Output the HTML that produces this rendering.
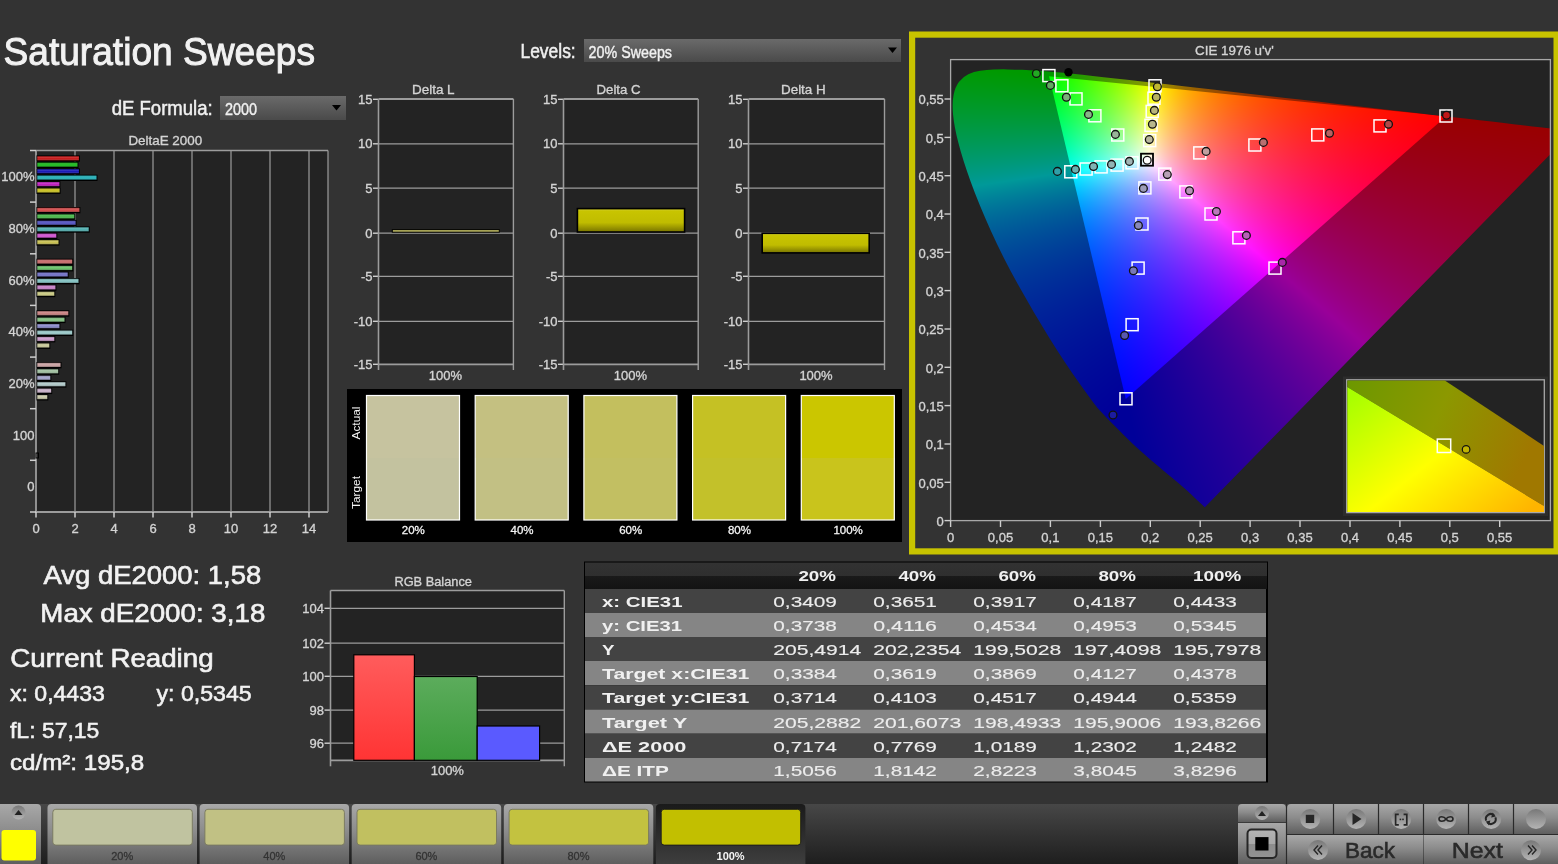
<!DOCTYPE html>
<html><head><meta charset="utf-8"><style>
html,body{margin:0;padding:0;background:#333333;width:1558px;height:864px;overflow:hidden}
svg{position:absolute;left:0;top:0}
text{font-family:"Liberation Sans",sans-serif}
#cie{position:absolute;left:951px;top:60px}
</style></head><body>
<svg id="fb" width="1558" height="864" viewBox="0 0 1558 864"><defs><linearGradient id="fbL" gradientUnits="userSpaceOnUse" x1="0.0" y1="70.0" x2="0.0" y2="508.0"><stop offset="0" stop-color="#009900"/><stop offset="0.2" stop-color="#009a40"/><stop offset="0.3" stop-color="#00908a"/><stop offset="0.43" stop-color="#0060a0"/><stop offset="0.6" stop-color="#0030a0"/><stop offset="0.8" stop-color="#0818a8"/><stop offset="1" stop-color="#2000a0"/></linearGradient><linearGradient id="fbRt" gradientUnits="userSpaceOnUse" x1="1446.2" y1="116.4" x2="1207.0" y2="507.7"><stop offset="0" stop-color="#990000"/><stop offset="0.5" stop-color="#880088"/><stop offset="1" stop-color="#2000a0"/></linearGradient><linearGradient id="fbR" gradientUnits="userSpaceOnUse" x1="1446.2" y1="116.4" x2="1079.3" y2="203.5"><stop offset="0" stop-color="#ff0000"/><stop offset="0.5" stop-color="#ff0000"/><stop offset="1" stop-color="#000000"/></linearGradient><linearGradient id="fbG" gradientUnits="userSpaceOnUse" x1="1049.0" y1="76.3" x2="1242.8" y2="295.8"><stop offset="0" stop-color="#00ff00"/><stop offset="0.5" stop-color="#00ff00"/><stop offset="1" stop-color="#000000"/></linearGradient><linearGradient id="fbB" gradientUnits="userSpaceOnUse" x1="1125.8" y1="399.1" x2="1157.2" y2="87.2"><stop offset="0" stop-color="#0000ff"/><stop offset="0.5" stop-color="#0000ff"/><stop offset="1" stop-color="#000000"/></linearGradient><clipPath id="fbclip"><rect x="951" y="60" width="599" height="460"/></clipPath><clipPath id="fbloc"><path d="M1204.8,507.2 L1196.7,499.9 L1187.0,490.2 L1177.2,482.1 L1167.5,474.0 L1157.8,465.9 L1148.1,457.8 L1138.3,448.9 L1128.6,440.0 L1118.9,430.2 L1109.2,420.5 L1099.4,410.0 L1094.4,404.4 L1065.1,363.3 L1033.3,312.2 L1002.7,257.0 L978.7,203.9 L962.5,159.2 L954.1,126.0 L952.0,102.8 L955.2,86.9 L962.9,76.8 L973.7,71.7 L986.6,69.8 L1000.6,69.3 L1014.8,69.5 L1029.7,70.2 L1045.7,71.3 L1063.1,72.9 L1082.2,74.8 L1103.5,77.1 L1126.9,79.7 L1152.9,82.7 L1181.4,85.9 L1212.5,89.5 L1246.1,93.4 L1281.6,97.5 L1318.1,101.7 L1353.4,105.8 L1387.8,109.7 L1419.0,113.3 L1446.6,116.5 L1470.0,119.2 L1489.7,121.4 L1506.2,123.3 L1520.6,125.0 L1532.7,126.4 L1542.5,127.5 L1550.1,128.4 L1556.1,129.1 L1560.5,129.6 L1565.8,130.2 L1573.0,131.0 Z"/></clipPath></defs><rect x="951" y="60" width="600" height="461" fill="#232323"/><g clip-path="url(#fbclip)"><g clip-path="url(#fbloc)"><path d="M1204.8,507.2 L1196.7,499.9 L1187.0,490.2 L1177.2,482.1 L1167.5,474.0 L1157.8,465.9 L1148.1,457.8 L1138.3,448.9 L1128.6,440.0 L1118.9,430.2 L1109.2,420.5 L1099.4,410.0 L1094.4,404.4 L1065.1,363.3 L1033.3,312.2 L1002.7,257.0 L978.7,203.9 L962.5,159.2 L954.1,126.0 L952.0,102.8 L955.2,86.9 L962.9,76.8 L973.7,71.7 L986.6,69.8 L1000.6,69.3 L1014.8,69.5 L1029.7,70.2 L1045.7,71.3 L1063.1,72.9 L1082.2,74.8 L1103.5,77.1 L1126.9,79.7 L1152.9,82.7 L1181.4,85.9 L1212.5,89.5 L1246.1,93.4 L1281.6,97.5 L1318.1,101.7 L1353.4,105.8 L1387.8,109.7 L1419.0,113.3 L1446.6,116.5 L1470.0,119.2 L1489.7,121.4 L1506.2,123.3 L1520.6,125.0 L1532.7,126.4 L1542.5,127.5 L1550.1,128.4 L1556.1,129.1 L1560.5,129.6 L1565.8,130.2 L1573.0,131.0 Z" fill="url(#fbL)"/><path d="M1446.2,116.4 L1575,130 L1207.0,507.7 L1125.8,399.1 Z" fill="url(#fbRt)"/></g><g style="isolation:isolate"><path d="M1446.2,116.4 L1049.0,76.3 L1125.8,399.1 Z" fill="#000"/><path d="M1446.2,116.4 L1049.0,76.3 L1125.8,399.1 Z" fill="url(#fbR)" style="mix-blend-mode:screen"/><path d="M1446.2,116.4 L1049.0,76.3 L1125.8,399.1 Z" fill="url(#fbG)" style="mix-blend-mode:screen"/><path d="M1446.2,116.4 L1049.0,76.3 L1125.8,399.1 Z" fill="url(#fbB)" style="mix-blend-mode:screen"/></g></g></svg>
<canvas id="cie" width="600" height="461"></canvas>
<svg width="1558" height="864" viewBox="0 0 1558 864">
<defs>
<linearGradient id="ddg" x1="0" y1="0" x2="0" y2="1"><stop offset="0" stop-color="#6a6a6a"/><stop offset="1" stop-color="#4a4a4a"/></linearGradient>
<linearGradient id="ybar" x1="0" y1="0" x2="0" y2="1"><stop offset="0" stop-color="#d4d030"/><stop offset="0.12" stop-color="#c8c400"/><stop offset="0.6" stop-color="#c0bc00"/><stop offset="1" stop-color="#787400"/></linearGradient>
<linearGradient id="rg" x1="0" y1="0" x2="0" y2="1"><stop offset="0" stop-color="#ff5c5c"/><stop offset="1" stop-color="#ff3434"/></linearGradient>
<linearGradient id="gg" x1="0" y1="0" x2="0" y2="1"><stop offset="0" stop-color="#5cac5c"/><stop offset="1" stop-color="#3a9a3a"/></linearGradient>
<linearGradient id="thg" x1="0" y1="0" x2="0" y2="1"><stop offset="0" stop-color="#323232"/><stop offset="0.5" stop-color="#2f2f2f"/><stop offset="0.52" stop-color="#1a1a1a"/><stop offset="1" stop-color="#131313"/></linearGradient>
<linearGradient id="tbg" x1="0" y1="0" x2="0" y2="1"><stop offset="0" stop-color="#474747"/><stop offset="1" stop-color="#1e1e1e"/></linearGradient>
<linearGradient id="btng" x1="0" y1="0" x2="0" y2="1"><stop offset="0" stop-color="#a8a8a8"/><stop offset="0.45" stop-color="#8c8c8c"/><stop offset="1" stop-color="#5e5e5e"/></linearGradient>
<linearGradient id="btng2" x1="0" y1="-0.5" x2="0" y2="1"><stop offset="0" stop-color="#a8a8a8"/><stop offset="0.45" stop-color="#8c8c8c"/><stop offset="1" stop-color="#5e5e5e"/></linearGradient>
<linearGradient id="selg" x1="0" y1="0" x2="0" y2="1"><stop offset="0" stop-color="#1a1a1a"/><stop offset="1" stop-color="#3e3e3e"/></linearGradient>
<linearGradient id="circg" x1="0" y1="0" x2="0" y2="1"><stop offset="0" stop-color="#787878"/><stop offset="1" stop-color="#b4b4b4"/></linearGradient>
<linearGradient id="olv" x1="0" y1="0" x2="1" y2="0.3"><stop offset="0" stop-color="#6c9800"/><stop offset="0.5" stop-color="#8c9800"/><stop offset="1" stop-color="#a07800"/></linearGradient>
<linearGradient id="ylw" x1="0" y1="0.1" x2="1" y2="0.9"><stop offset="0" stop-color="#a8ff00"/><stop offset="0.5" stop-color="#ffff00"/><stop offset="1" stop-color="#ffb400"/></linearGradient>
<linearGradient id="stopg" x1="0" y1="0" x2="0" y2="1"><stop offset="0" stop-color="#b4b4b4"/><stop offset="0.5" stop-color="#a8a8a8"/><stop offset="0.52" stop-color="#8c8c8c"/><stop offset="1" stop-color="#949494"/></linearGradient>
<linearGradient id="barsh" x1="0" y1="0" x2="0" y2="1"><stop offset="0" stop-color="#000" stop-opacity="0.25"/><stop offset="0.35" stop-color="#fff" stop-opacity="0.12"/><stop offset="0.6" stop-color="#fff" stop-opacity="0"/><stop offset="1" stop-color="#000" stop-opacity="0.4"/></linearGradient>
</defs>
<text x="3.5" y="65.0" font-size="39.0" fill="#f2f2f2" text-anchor="start" textLength="311.5" lengthAdjust="spacingAndGlyphs" stroke="#f2f2f2" stroke-width="0.98">Saturation Sweeps</text>
<text x="520.5" y="57.6" font-size="19.5" fill="#f0f0f0" text-anchor="start" textLength="55.2" lengthAdjust="spacingAndGlyphs" stroke="#f0f0f0" stroke-width="0.49">Levels:</text>
<rect x="584" y="39" width="317" height="23" fill="url(#ddg)"/>
<text x="588.6" y="57.6" font-size="16.0" fill="#f0f0f0" text-anchor="start" textLength="83.4" lengthAdjust="spacingAndGlyphs" stroke="#f0f0f0" stroke-width="0.40">20% Sweeps</text>
<path d="M888.0,47.5 h9 l-4.5,5.5 z" fill="#000"/>
<text x="111.7" y="115.0" font-size="19.5" fill="#f0f0f0" text-anchor="start" textLength="101.0" lengthAdjust="spacingAndGlyphs" stroke="#f0f0f0" stroke-width="0.49">dE Formula:</text>
<rect x="220" y="96" width="126" height="24" fill="url(#ddg)"/>
<text x="224.9" y="114.7" font-size="16.0" fill="#f0f0f0" text-anchor="start" textLength="32.0" lengthAdjust="spacingAndGlyphs" stroke="#f0f0f0" stroke-width="0.40">2000</text>
<path d="M332.0,105.0 h9 l-4.5,5.5 z" fill="#000"/>
<text x="128.4" y="144.8" font-size="13.0" fill="#d4d4d4" text-anchor="start" textLength="73.8" lengthAdjust="spacingAndGlyphs" stroke="#d4d4d4" stroke-width="0.33">DeltaE 2000</text>
<rect x="36.0" y="150.5" width="292.0" height="361.5" fill="#232323"/>
<line x1="75.0" y1="150.5" x2="75.0" y2="512.0" stroke="#9c9c9c" stroke-width="1.2"/>
<line x1="114.0" y1="150.5" x2="114.0" y2="512.0" stroke="#9c9c9c" stroke-width="1.2"/>
<line x1="153.0" y1="150.5" x2="153.0" y2="512.0" stroke="#9c9c9c" stroke-width="1.2"/>
<line x1="192.0" y1="150.5" x2="192.0" y2="512.0" stroke="#9c9c9c" stroke-width="1.2"/>
<line x1="231.0" y1="150.5" x2="231.0" y2="512.0" stroke="#9c9c9c" stroke-width="1.2"/>
<line x1="270.0" y1="150.5" x2="270.0" y2="512.0" stroke="#9c9c9c" stroke-width="1.2"/>
<line x1="309.0" y1="150.5" x2="309.0" y2="512.0" stroke="#9c9c9c" stroke-width="1.2"/>
<line x1="36.0" y1="150.5" x2="328.0" y2="150.5" stroke="#9c9c9c" stroke-width="1.5"/>
<line x1="328.0" y1="150.5" x2="328.0" y2="512.0" stroke="#9c9c9c" stroke-width="1.2"/>
<line x1="36.0" y1="150.5" x2="36.0" y2="512.0" stroke="#9c9c9c" stroke-width="1.8"/>
<line x1="35.1" y1="512.0" x2="328.0" y2="512.0" stroke="#9c9c9c" stroke-width="1.8"/>
<line x1="30.0" y1="150.5" x2="36.0" y2="150.5" stroke="#cfcfcf" stroke-width="1.5"/>
<line x1="30.0" y1="202.1" x2="36.0" y2="202.1" stroke="#cfcfcf" stroke-width="1.5"/>
<line x1="30.0" y1="253.8" x2="36.0" y2="253.8" stroke="#cfcfcf" stroke-width="1.5"/>
<line x1="30.0" y1="305.4" x2="36.0" y2="305.4" stroke="#cfcfcf" stroke-width="1.5"/>
<line x1="30.0" y1="357.1" x2="36.0" y2="357.1" stroke="#cfcfcf" stroke-width="1.5"/>
<line x1="30.0" y1="408.7" x2="36.0" y2="408.7" stroke="#cfcfcf" stroke-width="1.5"/>
<line x1="30.0" y1="460.3" x2="36.0" y2="460.3" stroke="#cfcfcf" stroke-width="1.5"/>
<line x1="30.0" y1="512.0" x2="36.0" y2="512.0" stroke="#cfcfcf" stroke-width="1.5"/>
<line x1="36.0" y1="512.0" x2="36.0" y2="517.5" stroke="#cfcfcf" stroke-width="1.5"/>
<text x="36.0" y="532.8" font-size="13.0" fill="#d4d4d4" text-anchor="middle" stroke="#d4d4d4" stroke-width="0.33">0</text>
<line x1="75.0" y1="512.0" x2="75.0" y2="517.5" stroke="#cfcfcf" stroke-width="1.5"/>
<text x="75.0" y="532.8" font-size="13.0" fill="#d4d4d4" text-anchor="middle" stroke="#d4d4d4" stroke-width="0.33">2</text>
<line x1="114.0" y1="512.0" x2="114.0" y2="517.5" stroke="#cfcfcf" stroke-width="1.5"/>
<text x="114.0" y="532.8" font-size="13.0" fill="#d4d4d4" text-anchor="middle" stroke="#d4d4d4" stroke-width="0.33">4</text>
<line x1="153.0" y1="512.0" x2="153.0" y2="517.5" stroke="#cfcfcf" stroke-width="1.5"/>
<text x="153.0" y="532.8" font-size="13.0" fill="#d4d4d4" text-anchor="middle" stroke="#d4d4d4" stroke-width="0.33">6</text>
<line x1="192.0" y1="512.0" x2="192.0" y2="517.5" stroke="#cfcfcf" stroke-width="1.5"/>
<text x="192.0" y="532.8" font-size="13.0" fill="#d4d4d4" text-anchor="middle" stroke="#d4d4d4" stroke-width="0.33">8</text>
<line x1="231.0" y1="512.0" x2="231.0" y2="517.5" stroke="#cfcfcf" stroke-width="1.5"/>
<text x="231.0" y="532.8" font-size="13.0" fill="#d4d4d4" text-anchor="middle" stroke="#d4d4d4" stroke-width="0.33">10</text>
<line x1="270.0" y1="512.0" x2="270.0" y2="517.5" stroke="#cfcfcf" stroke-width="1.5"/>
<text x="270.0" y="532.8" font-size="13.0" fill="#d4d4d4" text-anchor="middle" stroke="#d4d4d4" stroke-width="0.33">12</text>
<line x1="309.0" y1="512.0" x2="309.0" y2="517.5" stroke="#cfcfcf" stroke-width="1.5"/>
<text x="309.0" y="532.8" font-size="13.0" fill="#d4d4d4" text-anchor="middle" stroke="#d4d4d4" stroke-width="0.33">14</text>
<text x="34.5" y="181.3" font-size="13.0" fill="#d4d4d4" text-anchor="end" stroke="#d4d4d4" stroke-width="0.33">100%</text>
<text x="34.5" y="232.9" font-size="13.0" fill="#d4d4d4" text-anchor="end" stroke="#d4d4d4" stroke-width="0.33">80%</text>
<text x="34.5" y="284.6" font-size="13.0" fill="#d4d4d4" text-anchor="end" stroke="#d4d4d4" stroke-width="0.33">60%</text>
<text x="34.5" y="336.2" font-size="13.0" fill="#d4d4d4" text-anchor="end" stroke="#d4d4d4" stroke-width="0.33">40%</text>
<text x="34.5" y="387.9" font-size="13.0" fill="#d4d4d4" text-anchor="end" stroke="#d4d4d4" stroke-width="0.33">20%</text>
<text x="34.5" y="439.5" font-size="13.0" fill="#d4d4d4" text-anchor="end" stroke="#d4d4d4" stroke-width="0.33">100</text>
<text x="34.5" y="491.1" font-size="13.0" fill="#d4d4d4" text-anchor="end" stroke="#d4d4d4" stroke-width="0.33">0</text>
<rect x="36.5" y="155.4" width="43.4" height="6.3" fill="#000"/>
<rect x="37.3" y="156.2" width="41.6" height="4.2" fill="#c81818"/>
<rect x="37.3" y="156.2" width="41.6" height="4.2" fill="url(#barsh)"/>
<rect x="36.5" y="161.8" width="42.0" height="6.3" fill="#000"/>
<rect x="37.3" y="162.6" width="40.2" height="4.2" fill="#18b818"/>
<rect x="37.3" y="162.6" width="40.2" height="4.2" fill="url(#barsh)"/>
<rect x="36.5" y="168.3" width="43.4" height="6.3" fill="#000"/>
<rect x="37.3" y="169.1" width="41.6" height="4.2" fill="#1818b8"/>
<rect x="37.3" y="169.1" width="41.6" height="4.2" fill="url(#barsh)"/>
<rect x="36.5" y="174.7" width="61.0" height="6.3" fill="#000"/>
<rect x="37.3" y="175.5" width="59.2" height="4.2" fill="#20b0b8"/>
<rect x="37.3" y="175.5" width="59.2" height="4.2" fill="url(#barsh)"/>
<rect x="36.5" y="181.2" width="23.9" height="6.3" fill="#000"/>
<rect x="37.3" y="182.0" width="22.1" height="4.2" fill="#c020c0"/>
<rect x="37.3" y="182.0" width="22.1" height="4.2" fill="url(#barsh)"/>
<rect x="36.5" y="187.6" width="24.1" height="6.3" fill="#000"/>
<rect x="37.3" y="188.4" width="22.3" height="4.2" fill="#c8c020"/>
<rect x="37.3" y="188.4" width="22.3" height="4.2" fill="url(#barsh)"/>
<rect x="36.5" y="207.0" width="43.9" height="6.3" fill="#000"/>
<rect x="37.3" y="207.8" width="42.1" height="4.2" fill="#d04848"/>
<rect x="37.3" y="207.8" width="42.1" height="4.2" fill="url(#barsh)"/>
<rect x="36.5" y="213.5" width="38.8" height="6.3" fill="#000"/>
<rect x="37.3" y="214.3" width="37.0" height="4.2" fill="#48b848"/>
<rect x="37.3" y="214.3" width="37.0" height="4.2" fill="url(#barsh)"/>
<rect x="36.5" y="219.9" width="40.1" height="6.3" fill="#000"/>
<rect x="37.3" y="220.7" width="38.3" height="4.2" fill="#5050c0"/>
<rect x="37.3" y="220.7" width="38.3" height="4.2" fill="url(#barsh)"/>
<rect x="36.5" y="226.4" width="53.2" height="6.3" fill="#000"/>
<rect x="37.3" y="227.2" width="51.4" height="4.2" fill="#50b0b0"/>
<rect x="37.3" y="227.2" width="51.4" height="4.2" fill="url(#barsh)"/>
<rect x="36.5" y="232.8" width="20.8" height="6.3" fill="#000"/>
<rect x="37.3" y="233.6" width="19.0" height="4.2" fill="#d050d0"/>
<rect x="37.3" y="233.6" width="19.0" height="4.2" fill="url(#barsh)"/>
<rect x="36.5" y="239.3" width="23.0" height="6.3" fill="#000"/>
<rect x="37.3" y="240.1" width="21.2" height="4.2" fill="#c8c050"/>
<rect x="37.3" y="240.1" width="21.2" height="4.2" fill="url(#barsh)"/>
<rect x="36.5" y="258.7" width="36.7" height="6.3" fill="#000"/>
<rect x="37.3" y="259.5" width="34.9" height="4.2" fill="#c86868"/>
<rect x="37.3" y="259.5" width="34.9" height="4.2" fill="url(#barsh)"/>
<rect x="36.5" y="265.1" width="36.7" height="6.3" fill="#000"/>
<rect x="37.3" y="265.9" width="34.9" height="4.2" fill="#68c068"/>
<rect x="37.3" y="265.9" width="34.9" height="4.2" fill="url(#barsh)"/>
<rect x="36.5" y="271.6" width="32.2" height="6.3" fill="#000"/>
<rect x="37.3" y="272.4" width="30.4" height="4.2" fill="#7070c8"/>
<rect x="37.3" y="272.4" width="30.4" height="4.2" fill="url(#barsh)"/>
<rect x="36.5" y="278.0" width="43.0" height="6.3" fill="#000"/>
<rect x="37.3" y="278.8" width="41.2" height="4.2" fill="#80c0c0"/>
<rect x="37.3" y="278.8" width="41.2" height="4.2" fill="url(#barsh)"/>
<rect x="36.5" y="284.5" width="19.9" height="6.3" fill="#000"/>
<rect x="37.3" y="285.3" width="18.1" height="4.2" fill="#c880c8"/>
<rect x="37.3" y="285.3" width="18.1" height="4.2" fill="url(#barsh)"/>
<rect x="36.5" y="290.9" width="18.8" height="6.3" fill="#000"/>
<rect x="37.3" y="291.7" width="17.0" height="4.2" fill="#c8c880"/>
<rect x="37.3" y="291.7" width="17.0" height="4.2" fill="url(#barsh)"/>
<rect x="36.5" y="310.3" width="32.8" height="6.3" fill="#000"/>
<rect x="37.3" y="311.1" width="31.0" height="4.2" fill="#c88080"/>
<rect x="37.3" y="311.1" width="31.0" height="4.2" fill="url(#barsh)"/>
<rect x="36.5" y="316.8" width="29.0" height="6.3" fill="#000"/>
<rect x="37.3" y="317.6" width="27.2" height="4.2" fill="#80c080"/>
<rect x="37.3" y="317.6" width="27.2" height="4.2" fill="url(#barsh)"/>
<rect x="36.5" y="323.2" width="23.9" height="6.3" fill="#000"/>
<rect x="37.3" y="324.0" width="22.1" height="4.2" fill="#8888c8"/>
<rect x="37.3" y="324.0" width="22.1" height="4.2" fill="url(#barsh)"/>
<rect x="36.5" y="329.7" width="36.7" height="6.3" fill="#000"/>
<rect x="37.3" y="330.5" width="34.9" height="4.2" fill="#98c8c8"/>
<rect x="37.3" y="330.5" width="34.9" height="4.2" fill="url(#barsh)"/>
<rect x="36.5" y="336.1" width="18.8" height="6.3" fill="#000"/>
<rect x="37.3" y="336.9" width="17.0" height="4.2" fill="#c898c8"/>
<rect x="37.3" y="336.9" width="17.0" height="4.2" fill="url(#barsh)"/>
<rect x="36.5" y="342.6" width="13.8" height="6.3" fill="#000"/>
<rect x="37.3" y="343.4" width="12.0" height="4.2" fill="#c8c898"/>
<rect x="37.3" y="343.4" width="12.0" height="4.2" fill="url(#barsh)"/>
<rect x="36.5" y="362.0" width="25.0" height="6.3" fill="#000"/>
<rect x="37.3" y="362.8" width="23.2" height="4.2" fill="#c8a0a0"/>
<rect x="37.3" y="362.8" width="23.2" height="4.2" fill="url(#barsh)"/>
<rect x="36.5" y="368.4" width="22.7" height="6.3" fill="#000"/>
<rect x="37.3" y="369.2" width="20.9" height="4.2" fill="#a0c0a0"/>
<rect x="37.3" y="369.2" width="20.9" height="4.2" fill="url(#barsh)"/>
<rect x="36.5" y="374.9" width="14.8" height="6.3" fill="#000"/>
<rect x="37.3" y="375.7" width="13.0" height="4.2" fill="#a0a0c8"/>
<rect x="37.3" y="375.7" width="13.0" height="4.2" fill="url(#barsh)"/>
<rect x="36.5" y="381.3" width="29.9" height="6.3" fill="#000"/>
<rect x="37.3" y="382.1" width="28.1" height="4.2" fill="#b0c8c8"/>
<rect x="37.3" y="382.1" width="28.1" height="4.2" fill="url(#barsh)"/>
<rect x="36.5" y="387.8" width="15.7" height="6.3" fill="#000"/>
<rect x="37.3" y="388.6" width="13.9" height="4.2" fill="#c8b0c8"/>
<rect x="37.3" y="388.6" width="13.9" height="4.2" fill="url(#barsh)"/>
<rect x="36.5" y="394.2" width="11.8" height="6.3" fill="#000"/>
<rect x="37.3" y="395.0" width="10.0" height="4.2" fill="#c8c8a8"/>
<rect x="37.3" y="395.0" width="10.0" height="4.2" fill="url(#barsh)"/>
<rect x="36" y="453" width="2.5" height="5" fill="none" stroke="#000" stroke-width="1"/>
<text x="412.0" y="93.9" font-size="13.0" fill="#d4d4d4" text-anchor="start" textLength="42.6" lengthAdjust="spacingAndGlyphs" stroke="#d4d4d4" stroke-width="0.33">Delta L</text>
<rect x="378.5" y="99.0" width="134.9" height="265.3" fill="#232323"/>
<line x1="373.0" y1="99.3" x2="378.5" y2="99.3" stroke="#cfcfcf" stroke-width="1.4"/>
<text x="372.5" y="103.9" font-size="13.0" fill="#d4d4d4" text-anchor="end" stroke="#d4d4d4" stroke-width="0.33">15</text>
<line x1="378.5" y1="143.8" x2="513.4" y2="143.8" stroke="#9c9c9c" stroke-width="1.2"/>
<line x1="373.0" y1="143.8" x2="378.5" y2="143.8" stroke="#cfcfcf" stroke-width="1.4"/>
<text x="372.5" y="148.4" font-size="13.0" fill="#d4d4d4" text-anchor="end" stroke="#d4d4d4" stroke-width="0.33">10</text>
<line x1="378.5" y1="188.2" x2="513.4" y2="188.2" stroke="#9c9c9c" stroke-width="1.2"/>
<line x1="373.0" y1="188.2" x2="378.5" y2="188.2" stroke="#cfcfcf" stroke-width="1.4"/>
<text x="372.5" y="192.8" font-size="13.0" fill="#d4d4d4" text-anchor="end" stroke="#d4d4d4" stroke-width="0.33">5</text>
<line x1="378.5" y1="233.2" x2="513.4" y2="233.2" stroke="#9c9c9c" stroke-width="1.2"/>
<line x1="373.0" y1="233.2" x2="378.5" y2="233.2" stroke="#cfcfcf" stroke-width="1.4"/>
<text x="372.5" y="237.8" font-size="13.0" fill="#d4d4d4" text-anchor="end" stroke="#d4d4d4" stroke-width="0.33">0</text>
<line x1="378.5" y1="276.3" x2="513.4" y2="276.3" stroke="#9c9c9c" stroke-width="1.2"/>
<line x1="373.0" y1="276.3" x2="378.5" y2="276.3" stroke="#cfcfcf" stroke-width="1.4"/>
<text x="372.5" y="280.9" font-size="13.0" fill="#d4d4d4" text-anchor="end" stroke="#d4d4d4" stroke-width="0.33">-5</text>
<line x1="378.5" y1="321.3" x2="513.4" y2="321.3" stroke="#9c9c9c" stroke-width="1.2"/>
<line x1="373.0" y1="321.3" x2="378.5" y2="321.3" stroke="#cfcfcf" stroke-width="1.4"/>
<text x="372.5" y="325.9" font-size="13.0" fill="#d4d4d4" text-anchor="end" stroke="#d4d4d4" stroke-width="0.33">-10</text>
<line x1="373.0" y1="364.3" x2="378.5" y2="364.3" stroke="#cfcfcf" stroke-width="1.4"/>
<text x="372.5" y="368.9" font-size="13.0" fill="#d4d4d4" text-anchor="end" stroke="#d4d4d4" stroke-width="0.33">-15</text>
<line x1="378.5" y1="99.0" x2="513.4" y2="99.0" stroke="#9c9c9c" stroke-width="1.8"/>
<line x1="378.5" y1="364.3" x2="513.4" y2="364.3" stroke="#9c9c9c" stroke-width="1.8"/>
<line x1="378.5" y1="99.0" x2="378.5" y2="370.0" stroke="#9c9c9c" stroke-width="1.6"/>
<line x1="513.4" y1="99.0" x2="513.4" y2="370.0" stroke="#9c9c9c" stroke-width="1.4"/>
<text x="445.4" y="379.6" font-size="13.0" fill="#d4d4d4" text-anchor="middle" stroke="#d4d4d4" stroke-width="0.33">100%</text>
<text x="596.5" y="93.9" font-size="13.0" fill="#d4d4d4" text-anchor="start" textLength="44.1" lengthAdjust="spacingAndGlyphs" stroke="#d4d4d4" stroke-width="0.33">Delta C</text>
<rect x="563.5" y="99.0" width="134.7" height="265.3" fill="#232323"/>
<line x1="558.0" y1="99.3" x2="563.5" y2="99.3" stroke="#cfcfcf" stroke-width="1.4"/>
<text x="557.5" y="103.9" font-size="13.0" fill="#d4d4d4" text-anchor="end" stroke="#d4d4d4" stroke-width="0.33">15</text>
<line x1="563.5" y1="143.8" x2="698.2" y2="143.8" stroke="#9c9c9c" stroke-width="1.2"/>
<line x1="558.0" y1="143.8" x2="563.5" y2="143.8" stroke="#cfcfcf" stroke-width="1.4"/>
<text x="557.5" y="148.4" font-size="13.0" fill="#d4d4d4" text-anchor="end" stroke="#d4d4d4" stroke-width="0.33">10</text>
<line x1="563.5" y1="188.2" x2="698.2" y2="188.2" stroke="#9c9c9c" stroke-width="1.2"/>
<line x1="558.0" y1="188.2" x2="563.5" y2="188.2" stroke="#cfcfcf" stroke-width="1.4"/>
<text x="557.5" y="192.8" font-size="13.0" fill="#d4d4d4" text-anchor="end" stroke="#d4d4d4" stroke-width="0.33">5</text>
<line x1="563.5" y1="233.2" x2="698.2" y2="233.2" stroke="#9c9c9c" stroke-width="1.2"/>
<line x1="558.0" y1="233.2" x2="563.5" y2="233.2" stroke="#cfcfcf" stroke-width="1.4"/>
<text x="557.5" y="237.8" font-size="13.0" fill="#d4d4d4" text-anchor="end" stroke="#d4d4d4" stroke-width="0.33">0</text>
<line x1="563.5" y1="276.3" x2="698.2" y2="276.3" stroke="#9c9c9c" stroke-width="1.2"/>
<line x1="558.0" y1="276.3" x2="563.5" y2="276.3" stroke="#cfcfcf" stroke-width="1.4"/>
<text x="557.5" y="280.9" font-size="13.0" fill="#d4d4d4" text-anchor="end" stroke="#d4d4d4" stroke-width="0.33">-5</text>
<line x1="563.5" y1="321.3" x2="698.2" y2="321.3" stroke="#9c9c9c" stroke-width="1.2"/>
<line x1="558.0" y1="321.3" x2="563.5" y2="321.3" stroke="#cfcfcf" stroke-width="1.4"/>
<text x="557.5" y="325.9" font-size="13.0" fill="#d4d4d4" text-anchor="end" stroke="#d4d4d4" stroke-width="0.33">-10</text>
<line x1="558.0" y1="364.3" x2="563.5" y2="364.3" stroke="#cfcfcf" stroke-width="1.4"/>
<text x="557.5" y="368.9" font-size="13.0" fill="#d4d4d4" text-anchor="end" stroke="#d4d4d4" stroke-width="0.33">-15</text>
<line x1="563.5" y1="99.0" x2="698.2" y2="99.0" stroke="#9c9c9c" stroke-width="1.8"/>
<line x1="563.5" y1="364.3" x2="698.2" y2="364.3" stroke="#9c9c9c" stroke-width="1.8"/>
<line x1="563.5" y1="99.0" x2="563.5" y2="370.0" stroke="#9c9c9c" stroke-width="1.6"/>
<line x1="698.2" y1="99.0" x2="698.2" y2="370.0" stroke="#9c9c9c" stroke-width="1.4"/>
<text x="630.4" y="379.6" font-size="13.0" fill="#d4d4d4" text-anchor="middle" stroke="#d4d4d4" stroke-width="0.33">100%</text>
<text x="781.0" y="93.9" font-size="13.0" fill="#d4d4d4" text-anchor="start" textLength="44.7" lengthAdjust="spacingAndGlyphs" stroke="#d4d4d4" stroke-width="0.33">Delta H</text>
<rect x="748.5" y="99.0" width="136.0" height="265.3" fill="#232323"/>
<line x1="743.0" y1="99.3" x2="748.5" y2="99.3" stroke="#cfcfcf" stroke-width="1.4"/>
<text x="742.5" y="103.9" font-size="13.0" fill="#d4d4d4" text-anchor="end" stroke="#d4d4d4" stroke-width="0.33">15</text>
<line x1="748.5" y1="143.8" x2="884.5" y2="143.8" stroke="#9c9c9c" stroke-width="1.2"/>
<line x1="743.0" y1="143.8" x2="748.5" y2="143.8" stroke="#cfcfcf" stroke-width="1.4"/>
<text x="742.5" y="148.4" font-size="13.0" fill="#d4d4d4" text-anchor="end" stroke="#d4d4d4" stroke-width="0.33">10</text>
<line x1="748.5" y1="188.2" x2="884.5" y2="188.2" stroke="#9c9c9c" stroke-width="1.2"/>
<line x1="743.0" y1="188.2" x2="748.5" y2="188.2" stroke="#cfcfcf" stroke-width="1.4"/>
<text x="742.5" y="192.8" font-size="13.0" fill="#d4d4d4" text-anchor="end" stroke="#d4d4d4" stroke-width="0.33">5</text>
<line x1="748.5" y1="233.2" x2="884.5" y2="233.2" stroke="#9c9c9c" stroke-width="1.2"/>
<line x1="743.0" y1="233.2" x2="748.5" y2="233.2" stroke="#cfcfcf" stroke-width="1.4"/>
<text x="742.5" y="237.8" font-size="13.0" fill="#d4d4d4" text-anchor="end" stroke="#d4d4d4" stroke-width="0.33">0</text>
<line x1="748.5" y1="276.3" x2="884.5" y2="276.3" stroke="#9c9c9c" stroke-width="1.2"/>
<line x1="743.0" y1="276.3" x2="748.5" y2="276.3" stroke="#cfcfcf" stroke-width="1.4"/>
<text x="742.5" y="280.9" font-size="13.0" fill="#d4d4d4" text-anchor="end" stroke="#d4d4d4" stroke-width="0.33">-5</text>
<line x1="748.5" y1="321.3" x2="884.5" y2="321.3" stroke="#9c9c9c" stroke-width="1.2"/>
<line x1="743.0" y1="321.3" x2="748.5" y2="321.3" stroke="#cfcfcf" stroke-width="1.4"/>
<text x="742.5" y="325.9" font-size="13.0" fill="#d4d4d4" text-anchor="end" stroke="#d4d4d4" stroke-width="0.33">-10</text>
<line x1="743.0" y1="364.3" x2="748.5" y2="364.3" stroke="#cfcfcf" stroke-width="1.4"/>
<text x="742.5" y="368.9" font-size="13.0" fill="#d4d4d4" text-anchor="end" stroke="#d4d4d4" stroke-width="0.33">-15</text>
<line x1="748.5" y1="99.0" x2="884.5" y2="99.0" stroke="#9c9c9c" stroke-width="1.8"/>
<line x1="748.5" y1="364.3" x2="884.5" y2="364.3" stroke="#9c9c9c" stroke-width="1.8"/>
<line x1="748.5" y1="99.0" x2="748.5" y2="370.0" stroke="#9c9c9c" stroke-width="1.6"/>
<line x1="884.5" y1="99.0" x2="884.5" y2="370.0" stroke="#9c9c9c" stroke-width="1.4"/>
<text x="816.0" y="379.6" font-size="13.0" fill="#d4d4d4" text-anchor="middle" stroke="#d4d4d4" stroke-width="0.33">100%</text>
<rect x="392.3" y="229.6" width="107" height="2.6" fill="#b8b460" stroke="#000" stroke-width="1"/>
<rect x="577.4" y="208.6" width="107.2" height="23.4" fill="url(#ybar)" stroke="#000" stroke-width="1.6"/>
<rect x="762.2" y="233.3" width="107" height="19.6" fill="url(#ybar)" stroke="#000" stroke-width="1.6"/>
<rect x="347.0" y="389.0" width="555.0" height="153.0" fill="#000"/>
<rect x="366.5" y="395.5" width="93" height="124.5" fill="#c6c39f"/>
<rect x="366.5" y="458" width="93" height="62" fill="#c3c29f"/>
<rect x="366.5" y="395.5" width="93" height="124.5" fill="none" stroke="#fff" stroke-width="1.2"/>
<text x="413.3" y="534.0" font-size="11.5" fill="#f4f4f4" text-anchor="middle" stroke="#f4f4f4" stroke-width="0.29">20%</text>
<rect x="475.2" y="395.5" width="93" height="124.5" fill="#c4c081"/>
<rect x="475.2" y="458" width="93" height="62" fill="#c2c084"/>
<rect x="475.2" y="395.5" width="93" height="124.5" fill="none" stroke="#fff" stroke-width="1.2"/>
<text x="522.0" y="534.0" font-size="11.5" fill="#f4f4f4" text-anchor="middle" stroke="#f4f4f4" stroke-width="0.29">40%</text>
<rect x="583.9" y="395.5" width="93" height="124.5" fill="#c3bf5e"/>
<rect x="583.9" y="458" width="93" height="62" fill="#c2bf62"/>
<rect x="583.9" y="395.5" width="93" height="124.5" fill="none" stroke="#fff" stroke-width="1.2"/>
<text x="630.7" y="534.0" font-size="11.5" fill="#f4f4f4" text-anchor="middle" stroke="#f4f4f4" stroke-width="0.29">60%</text>
<rect x="692.6" y="395.5" width="93" height="124.5" fill="#c5c124"/>
<rect x="692.6" y="458" width="93" height="62" fill="#c3c12a"/>
<rect x="692.6" y="395.5" width="93" height="124.5" fill="none" stroke="#fff" stroke-width="1.2"/>
<text x="739.4" y="534.0" font-size="11.5" fill="#f4f4f4" text-anchor="middle" stroke="#f4f4f4" stroke-width="0.29">80%</text>
<rect x="801.3" y="395.5" width="93" height="124.5" fill="#cbc600"/>
<rect x="801.3" y="458" width="93" height="62" fill="#c9c41c"/>
<rect x="801.3" y="395.5" width="93" height="124.5" fill="none" stroke="#fff" stroke-width="1.2"/>
<text x="848.1" y="534.0" font-size="11.5" fill="#f4f4f4" text-anchor="middle" stroke="#f4f4f4" stroke-width="0.29">100%</text>
<text transform="translate(359.5,423) rotate(-90)" font-size="11.5" fill="#f4f4f4" text-anchor="middle" textLength="33" lengthAdjust="spacingAndGlyphs">Actual</text>
<text transform="translate(359.5,492.5) rotate(-90)" font-size="11.5" fill="#f4f4f4" text-anchor="middle" textLength="33" lengthAdjust="spacingAndGlyphs">Target</text>
<text x="43.5" y="584.4" font-size="25.0" fill="#f2f2f2" text-anchor="start" textLength="217.7" lengthAdjust="spacingAndGlyphs" stroke="#f2f2f2" stroke-width="0.62">Avg dE2000: 1,58</text>
<text x="40.3" y="622.2" font-size="25.0" fill="#f2f2f2" text-anchor="start" textLength="225.0" lengthAdjust="spacingAndGlyphs" stroke="#f2f2f2" stroke-width="0.62">Max dE2000: 3,18</text>
<text x="10.3" y="667.1" font-size="25.0" fill="#f2f2f2" text-anchor="start" textLength="203.3" lengthAdjust="spacingAndGlyphs" stroke="#f2f2f2" stroke-width="0.62">Current Reading</text>
<text x="10.0" y="700.6" font-size="21.5" fill="#f2f2f2" text-anchor="start" textLength="94.8" lengthAdjust="spacingAndGlyphs" stroke="#f2f2f2" stroke-width="0.54">x: 0,4433</text>
<text x="156.5" y="700.6" font-size="21.5" fill="#f2f2f2" text-anchor="start" textLength="95.2" lengthAdjust="spacingAndGlyphs" stroke="#f2f2f2" stroke-width="0.54">y: 0,5345</text>
<text x="10.0" y="737.9" font-size="21.5" fill="#f2f2f2" text-anchor="start" textLength="89.3" lengthAdjust="spacingAndGlyphs" stroke="#f2f2f2" stroke-width="0.54">fL: 57,15</text>
<text x="10.0" y="770.0" font-size="21.5" fill="#f2f2f2" text-anchor="start" textLength="134.2" lengthAdjust="spacingAndGlyphs" stroke="#f2f2f2" stroke-width="0.54">cd/m²: 195,8</text>
<text x="394.4" y="585.9" font-size="13.0" fill="#d4d4d4" text-anchor="start" textLength="77.6" lengthAdjust="spacingAndGlyphs" stroke="#d4d4d4" stroke-width="0.33">RGB Balance</text>
<rect x="330.5" y="590.5" width="233.8" height="169.8" fill="#232323"/>
<line x1="330.5" y1="608.3" x2="564.3" y2="608.3" stroke="#9c9c9c" stroke-width="1.2"/>
<line x1="324.5" y1="608.3" x2="330.5" y2="608.3" stroke="#cfcfcf" stroke-width="1.4"/>
<text x="324.0" y="612.9" font-size="13.0" fill="#d4d4d4" text-anchor="end" stroke="#d4d4d4" stroke-width="0.33">104</text>
<line x1="330.5" y1="643.2" x2="564.3" y2="643.2" stroke="#9c9c9c" stroke-width="1.2"/>
<line x1="324.5" y1="643.2" x2="330.5" y2="643.2" stroke="#cfcfcf" stroke-width="1.4"/>
<text x="324.0" y="647.8" font-size="13.0" fill="#d4d4d4" text-anchor="end" stroke="#d4d4d4" stroke-width="0.33">102</text>
<line x1="330.5" y1="676.3" x2="564.3" y2="676.3" stroke="#9c9c9c" stroke-width="1.2"/>
<line x1="324.5" y1="676.3" x2="330.5" y2="676.3" stroke="#cfcfcf" stroke-width="1.4"/>
<text x="324.0" y="680.9" font-size="13.0" fill="#d4d4d4" text-anchor="end" stroke="#d4d4d4" stroke-width="0.33">100</text>
<line x1="330.5" y1="710.1" x2="564.3" y2="710.1" stroke="#9c9c9c" stroke-width="1.2"/>
<line x1="324.5" y1="710.1" x2="330.5" y2="710.1" stroke="#cfcfcf" stroke-width="1.4"/>
<text x="324.0" y="714.7" font-size="13.0" fill="#d4d4d4" text-anchor="end" stroke="#d4d4d4" stroke-width="0.33">98</text>
<line x1="330.5" y1="743.2" x2="564.3" y2="743.2" stroke="#9c9c9c" stroke-width="1.2"/>
<line x1="324.5" y1="743.2" x2="330.5" y2="743.2" stroke="#cfcfcf" stroke-width="1.4"/>
<text x="324.0" y="747.8" font-size="13.0" fill="#d4d4d4" text-anchor="end" stroke="#d4d4d4" stroke-width="0.33">96</text>
<line x1="330.5" y1="590.5" x2="564.3" y2="590.5" stroke="#9c9c9c" stroke-width="1.4"/>
<line x1="564.3" y1="590.5" x2="564.3" y2="766.3" stroke="#9c9c9c" stroke-width="1.4"/>
<line x1="330.5" y1="590.5" x2="330.5" y2="766.3" stroke="#9c9c9c" stroke-width="1.6"/>
<line x1="330.5" y1="760.3" x2="564.3" y2="760.3" stroke="#9c9c9c" stroke-width="1.8"/>
<rect x="353.8" y="654.8" width="60.6" height="105.5" fill="url(#rg)" stroke="#000" stroke-width="1.2"/>
<rect x="414.4" y="676.5" width="62.8" height="83.8" fill="url(#gg)" stroke="#000" stroke-width="1.2"/>
<rect x="477.2" y="726" width="62.4" height="34.3" fill="#5a5aff" stroke="#000" stroke-width="1.2"/>
<text x="447.3" y="775.0" font-size="13.0" fill="#d4d4d4" text-anchor="middle" stroke="#d4d4d4" stroke-width="0.33">100%</text>
<rect x="584.0" y="561.5" width="684.0" height="221.0" fill="#000"/>
<rect x="585" y="562.5" width="682" height="26.5" fill="url(#thg)"/>
<rect x="585.0" y="589.0" width="681.0" height="24.0" fill="#434343"/>
<text x="602.0" y="607.0" font-size="15.5" fill="#f0f0f0" text-anchor="start" font-weight="bold" textLength="80.5" lengthAdjust="spacingAndGlyphs">x: CIE31</text>
<text x="773.3" y="607.0" font-size="15.5" fill="#ececec" text-anchor="start" textLength="63.6" lengthAdjust="spacingAndGlyphs" stroke="#ececec" stroke-width="0.15">0,3409</text>
<text x="873.3" y="607.0" font-size="15.5" fill="#ececec" text-anchor="start" textLength="63.6" lengthAdjust="spacingAndGlyphs" stroke="#ececec" stroke-width="0.15">0,3651</text>
<text x="973.3" y="607.0" font-size="15.5" fill="#ececec" text-anchor="start" textLength="63.6" lengthAdjust="spacingAndGlyphs" stroke="#ececec" stroke-width="0.15">0,3917</text>
<text x="1073.3" y="607.0" font-size="15.5" fill="#ececec" text-anchor="start" textLength="63.6" lengthAdjust="spacingAndGlyphs" stroke="#ececec" stroke-width="0.15">0,4187</text>
<text x="1173.3" y="607.0" font-size="15.5" fill="#ececec" text-anchor="start" textLength="63.6" lengthAdjust="spacingAndGlyphs" stroke="#ececec" stroke-width="0.15">0,4433</text>
<rect x="585.0" y="613.0" width="681.0" height="24.0" fill="#858585"/>
<text x="602.0" y="631.0" font-size="15.5" fill="#f0f0f0" text-anchor="start" font-weight="bold" textLength="80.0" lengthAdjust="spacingAndGlyphs">y: CIE31</text>
<text x="773.3" y="631.0" font-size="15.5" fill="#ececec" text-anchor="start" textLength="63.6" lengthAdjust="spacingAndGlyphs" stroke="#ececec" stroke-width="0.15">0,3738</text>
<text x="873.3" y="631.0" font-size="15.5" fill="#ececec" text-anchor="start" textLength="63.6" lengthAdjust="spacingAndGlyphs" stroke="#ececec" stroke-width="0.15">0,4116</text>
<text x="973.3" y="631.0" font-size="15.5" fill="#ececec" text-anchor="start" textLength="63.6" lengthAdjust="spacingAndGlyphs" stroke="#ececec" stroke-width="0.15">0,4534</text>
<text x="1073.3" y="631.0" font-size="15.5" fill="#ececec" text-anchor="start" textLength="63.6" lengthAdjust="spacingAndGlyphs" stroke="#ececec" stroke-width="0.15">0,4953</text>
<text x="1173.3" y="631.0" font-size="15.5" fill="#ececec" text-anchor="start" textLength="63.6" lengthAdjust="spacingAndGlyphs" stroke="#ececec" stroke-width="0.15">0,5345</text>
<rect x="585.0" y="637.0" width="681.0" height="24.0" fill="#434343"/>
<text x="602.0" y="655.0" font-size="15.5" fill="#f0f0f0" text-anchor="start" font-weight="bold" textLength="12.5" lengthAdjust="spacingAndGlyphs">Y</text>
<text x="773.3" y="655.0" font-size="15.5" fill="#ececec" text-anchor="start" textLength="88.0" lengthAdjust="spacingAndGlyphs" stroke="#ececec" stroke-width="0.15">205,4914</text>
<text x="873.3" y="655.0" font-size="15.5" fill="#ececec" text-anchor="start" textLength="88.0" lengthAdjust="spacingAndGlyphs" stroke="#ececec" stroke-width="0.15">202,2354</text>
<text x="973.3" y="655.0" font-size="15.5" fill="#ececec" text-anchor="start" textLength="88.0" lengthAdjust="spacingAndGlyphs" stroke="#ececec" stroke-width="0.15">199,5028</text>
<text x="1073.3" y="655.0" font-size="15.5" fill="#ececec" text-anchor="start" textLength="88.0" lengthAdjust="spacingAndGlyphs" stroke="#ececec" stroke-width="0.15">197,4098</text>
<text x="1173.3" y="655.0" font-size="15.5" fill="#ececec" text-anchor="start" textLength="88.0" lengthAdjust="spacingAndGlyphs" stroke="#ececec" stroke-width="0.15">195,7978</text>
<rect x="585.0" y="661.0" width="681.0" height="24.3" fill="#858585"/>
<text x="602.0" y="679.0" font-size="15.5" fill="#f0f0f0" text-anchor="start" font-weight="bold" textLength="147.3" lengthAdjust="spacingAndGlyphs">Target x:CIE31</text>
<text x="773.3" y="679.0" font-size="15.5" fill="#ececec" text-anchor="start" textLength="63.6" lengthAdjust="spacingAndGlyphs" stroke="#ececec" stroke-width="0.15">0,3384</text>
<text x="873.3" y="679.0" font-size="15.5" fill="#ececec" text-anchor="start" textLength="63.6" lengthAdjust="spacingAndGlyphs" stroke="#ececec" stroke-width="0.15">0,3619</text>
<text x="973.3" y="679.0" font-size="15.5" fill="#ececec" text-anchor="start" textLength="63.6" lengthAdjust="spacingAndGlyphs" stroke="#ececec" stroke-width="0.15">0,3869</text>
<text x="1073.3" y="679.0" font-size="15.5" fill="#ececec" text-anchor="start" textLength="63.6" lengthAdjust="spacingAndGlyphs" stroke="#ececec" stroke-width="0.15">0,4127</text>
<text x="1173.3" y="679.0" font-size="15.5" fill="#ececec" text-anchor="start" textLength="63.6" lengthAdjust="spacingAndGlyphs" stroke="#ececec" stroke-width="0.15">0,4378</text>
<rect x="585.0" y="685.3" width="681.0" height="24.2" fill="#434343"/>
<text x="602.0" y="703.3" font-size="15.5" fill="#f0f0f0" text-anchor="start" font-weight="bold" textLength="147.3" lengthAdjust="spacingAndGlyphs">Target y:CIE31</text>
<text x="773.3" y="703.3" font-size="15.5" fill="#ececec" text-anchor="start" textLength="63.6" lengthAdjust="spacingAndGlyphs" stroke="#ececec" stroke-width="0.15">0,3714</text>
<text x="873.3" y="703.3" font-size="15.5" fill="#ececec" text-anchor="start" textLength="63.6" lengthAdjust="spacingAndGlyphs" stroke="#ececec" stroke-width="0.15">0,4103</text>
<text x="973.3" y="703.3" font-size="15.5" fill="#ececec" text-anchor="start" textLength="63.6" lengthAdjust="spacingAndGlyphs" stroke="#ececec" stroke-width="0.15">0,4517</text>
<text x="1073.3" y="703.3" font-size="15.5" fill="#ececec" text-anchor="start" textLength="63.6" lengthAdjust="spacingAndGlyphs" stroke="#ececec" stroke-width="0.15">0,4944</text>
<text x="1173.3" y="703.3" font-size="15.5" fill="#ececec" text-anchor="start" textLength="63.6" lengthAdjust="spacingAndGlyphs" stroke="#ececec" stroke-width="0.15">0,5359</text>
<rect x="585.0" y="709.5" width="681.0" height="24.2" fill="#858585"/>
<text x="602.0" y="727.5" font-size="15.5" fill="#f0f0f0" text-anchor="start" font-weight="bold" textLength="85.3" lengthAdjust="spacingAndGlyphs">Target Y</text>
<text x="773.3" y="727.5" font-size="15.5" fill="#ececec" text-anchor="start" textLength="88.0" lengthAdjust="spacingAndGlyphs" stroke="#ececec" stroke-width="0.15">205,2882</text>
<text x="873.3" y="727.5" font-size="15.5" fill="#ececec" text-anchor="start" textLength="88.0" lengthAdjust="spacingAndGlyphs" stroke="#ececec" stroke-width="0.15">201,6073</text>
<text x="973.3" y="727.5" font-size="15.5" fill="#ececec" text-anchor="start" textLength="88.0" lengthAdjust="spacingAndGlyphs" stroke="#ececec" stroke-width="0.15">198,4933</text>
<text x="1073.3" y="727.5" font-size="15.5" fill="#ececec" text-anchor="start" textLength="88.0" lengthAdjust="spacingAndGlyphs" stroke="#ececec" stroke-width="0.15">195,9006</text>
<text x="1173.3" y="727.5" font-size="15.5" fill="#ececec" text-anchor="start" textLength="88.0" lengthAdjust="spacingAndGlyphs" stroke="#ececec" stroke-width="0.15">193,8266</text>
<rect x="585.0" y="733.7" width="681.0" height="24.2" fill="#434343"/>
<text x="602.0" y="751.7" font-size="15.5" fill="#f0f0f0" text-anchor="start" font-weight="bold" textLength="84.4" lengthAdjust="spacingAndGlyphs">ΔE 2000</text>
<text x="773.3" y="751.7" font-size="15.5" fill="#ececec" text-anchor="start" textLength="63.6" lengthAdjust="spacingAndGlyphs" stroke="#ececec" stroke-width="0.15">0,7174</text>
<text x="873.3" y="751.7" font-size="15.5" fill="#ececec" text-anchor="start" textLength="63.6" lengthAdjust="spacingAndGlyphs" stroke="#ececec" stroke-width="0.15">0,7769</text>
<text x="973.3" y="751.7" font-size="15.5" fill="#ececec" text-anchor="start" textLength="63.6" lengthAdjust="spacingAndGlyphs" stroke="#ececec" stroke-width="0.15">1,0189</text>
<text x="1073.3" y="751.7" font-size="15.5" fill="#ececec" text-anchor="start" textLength="63.6" lengthAdjust="spacingAndGlyphs" stroke="#ececec" stroke-width="0.15">1,2302</text>
<text x="1173.3" y="751.7" font-size="15.5" fill="#ececec" text-anchor="start" textLength="63.6" lengthAdjust="spacingAndGlyphs" stroke="#ececec" stroke-width="0.15">1,2482</text>
<rect x="585.0" y="757.9" width="681.0" height="23.6" fill="#858585"/>
<text x="602.0" y="775.9" font-size="15.5" fill="#f0f0f0" text-anchor="start" font-weight="bold" textLength="66.9" lengthAdjust="spacingAndGlyphs">ΔE ITP</text>
<text x="773.3" y="775.9" font-size="15.5" fill="#ececec" text-anchor="start" textLength="63.6" lengthAdjust="spacingAndGlyphs" stroke="#ececec" stroke-width="0.15">1,5056</text>
<text x="873.3" y="775.9" font-size="15.5" fill="#ececec" text-anchor="start" textLength="63.6" lengthAdjust="spacingAndGlyphs" stroke="#ececec" stroke-width="0.15">1,8142</text>
<text x="973.3" y="775.9" font-size="15.5" fill="#ececec" text-anchor="start" textLength="63.6" lengthAdjust="spacingAndGlyphs" stroke="#ececec" stroke-width="0.15">2,8223</text>
<text x="1073.3" y="775.9" font-size="15.5" fill="#ececec" text-anchor="start" textLength="63.6" lengthAdjust="spacingAndGlyphs" stroke="#ececec" stroke-width="0.15">3,8045</text>
<text x="1173.3" y="775.9" font-size="15.5" fill="#ececec" text-anchor="start" textLength="63.6" lengthAdjust="spacingAndGlyphs" stroke="#ececec" stroke-width="0.15">3,8296</text>
<text x="798.4" y="581.0" font-size="14.0" fill="#f0f0f0" text-anchor="start" font-weight="bold" textLength="37.6" lengthAdjust="spacingAndGlyphs">20%</text>
<text x="898.4" y="581.0" font-size="14.0" fill="#f0f0f0" text-anchor="start" font-weight="bold" textLength="37.6" lengthAdjust="spacingAndGlyphs">40%</text>
<text x="998.4" y="581.0" font-size="14.0" fill="#f0f0f0" text-anchor="start" font-weight="bold" textLength="37.6" lengthAdjust="spacingAndGlyphs">60%</text>
<text x="1098.4" y="581.0" font-size="14.0" fill="#f0f0f0" text-anchor="start" font-weight="bold" textLength="37.6" lengthAdjust="spacingAndGlyphs">80%</text>
<text x="1193.1" y="581.0" font-size="14.0" fill="#f0f0f0" text-anchor="start" font-weight="bold" textLength="48.2" lengthAdjust="spacingAndGlyphs">100%</text>
<rect x="0" y="804" width="1558" height="60" fill="url(#tbg)"/>
<path d="M0,804 h37 a4,4 0 0 1 4,4 v56 h-41 z" fill="url(#btng)"/>
<circle cx="18.5" cy="812.5" r="7" fill="url(#circg)"/>
<path d="M14.5,815 l4,-5 l4,5 z" fill="#222"/>
<rect x="1.5" y="830" width="34.5" height="30.5" rx="3" fill="#ffff00"/>
<path d="M51.5,804 h141.5 a4,4 0 0 1 4,4 v56 h-149.5 v-56 a4,4 0 0 1 4,-4 z" fill="url(#btng)"/>
<rect x="52.8" y="809.3" width="139.5" height="35.8" rx="3" fill="#c0c3a0" stroke="#77775e" stroke-width="0.9"/>
<text x="122.2" y="859.5" font-size="11.0" fill="#333" text-anchor="middle" stroke="#333" stroke-width="0.28">20%</text>
<path d="M203.6,804 h141.5 a4,4 0 0 1 4,4 v56 h-149.5 v-56 a4,4 0 0 1 4,-4 z" fill="url(#btng)"/>
<rect x="204.9" y="809.3" width="139.5" height="35.8" rx="3" fill="#c1c184" stroke="#77775e" stroke-width="0.9"/>
<text x="274.3" y="859.5" font-size="11.0" fill="#333" text-anchor="middle" stroke="#333" stroke-width="0.28">40%</text>
<path d="M355.7,804 h141.5 a4,4 0 0 1 4,4 v56 h-149.5 v-56 a4,4 0 0 1 4,-4 z" fill="url(#btng)"/>
<rect x="357.0" y="809.3" width="139.5" height="35.8" rx="3" fill="#c1c060" stroke="#77775e" stroke-width="0.9"/>
<text x="426.4" y="859.5" font-size="11.0" fill="#333" text-anchor="middle" stroke="#333" stroke-width="0.28">60%</text>
<path d="M507.8,804 h141.5 a4,4 0 0 1 4,4 v56 h-149.5 v-56 a4,4 0 0 1 4,-4 z" fill="url(#btng)"/>
<rect x="509.1" y="809.3" width="139.5" height="35.8" rx="3" fill="#c3c240" stroke="#77775e" stroke-width="0.9"/>
<text x="578.5" y="859.5" font-size="11.0" fill="#333" text-anchor="middle" stroke="#333" stroke-width="0.28">80%</text>
<path d="M659.9,804 h141.5 a4,4 0 0 1 4,4 v56 h-149.5 v-56 a4,4 0 0 1 4,-4 z" fill="url(#selg)"/>
<rect x="661.2" y="809.3" width="139.5" height="35.8" rx="3" fill="#c2bf00" stroke="#1a1a1a" stroke-width="0.9"/>
<text x="730.6" y="859.5" font-size="11.0" fill="#f4f4f4" text-anchor="middle" font-weight="bold">100%</text>
<path d="M1238,808 a4,4 0 0 1 4,-4 h40 a4,4 0 0 1 4,4 v14 h-48 z" fill="url(#btng)"/>
<rect x="1238" y="823" width="48" height="41" fill="url(#btng)"/>
<circle cx="1262" cy="813" r="7" fill="url(#circg)"/>
<path d="M1258,816 l4,-5 l4,5 z" fill="#222"/>
<rect x="1247.5" y="829.5" width="29" height="28.5" rx="4" fill="url(#stopg)" stroke="#262626" stroke-width="2"/>
<rect x="1255.3" y="837.1" width="13.2" height="13.4" fill="#000"/>
<rect x="1287" y="804" width="46.5" height="30" rx="4" fill="url(#btng)"/>
<rect x="1297" y="804" width="36.5" height="30" fill="url(#btng)"/><rect x="1287" y="814" width="46.5" height="20" fill="url(#btng2)"/>
<circle cx="1310.2" cy="819" r="10" fill="url(#circg)"/>
<rect x="1334" y="804" width="44.5" height="30" rx="0" fill="url(#btng)"/>
<circle cx="1356.2" cy="819" r="10" fill="url(#circg)"/>
<rect x="1379" y="804" width="44.5" height="30" rx="0" fill="url(#btng)"/>
<circle cx="1401.2" cy="819" r="10" fill="url(#circg)"/>
<rect x="1424" y="804" width="44.5" height="30" rx="0" fill="url(#btng)"/>
<circle cx="1446.2" cy="819" r="10" fill="url(#circg)"/>
<rect x="1469" y="804" width="44.5" height="30" rx="0" fill="url(#btng)"/>
<circle cx="1491.2" cy="819" r="10" fill="url(#circg)"/>
<rect x="1514" y="804" width="44" height="30" rx="0" fill="url(#btng)"/>
<circle cx="1536.0" cy="819" r="10" fill="url(#circg)"/>
<rect x="1287" y="835" width="136.5" height="29" fill="url(#btng)"/>
<rect x="1424" y="835" width="134" height="29" fill="url(#btng)"/>
<line x1="1333.5" y1="804.0" x2="1333.5" y2="834.0" stroke="#2a2a2a" stroke-width="1.2"/>
<line x1="1378.5" y1="804.0" x2="1378.5" y2="834.0" stroke="#2a2a2a" stroke-width="1.2"/>
<line x1="1423.5" y1="804.0" x2="1423.5" y2="834.0" stroke="#2a2a2a" stroke-width="1.2"/>
<line x1="1468.5" y1="804.0" x2="1468.5" y2="834.0" stroke="#2a2a2a" stroke-width="1.2"/>
<line x1="1513.5" y1="804.0" x2="1513.5" y2="834.0" stroke="#2a2a2a" stroke-width="1.2"/>
<line x1="1287.0" y1="834.5" x2="1558.0" y2="834.5" stroke="#2a2a2a" stroke-width="1.2"/>
<line x1="1286.5" y1="804.0" x2="1286.5" y2="864.0" stroke="#2a2a2a" stroke-width="1.2"/>
<rect x="1305.8" y="814.8" width="8.4" height="8.2" fill="#262626"/>
<path d="M1352.5,813 l9,6 l-9,6 z" fill="#262626"/>
<path d="M1398.8,814.3 h-3.2 v10.5 h3.2 M1403.6,814.3 h3.2 v10.5 h-3.2" fill="none" stroke="#262626" stroke-width="1.7"/>
<rect x="1399.6" y="818.6" width="1.6" height="1.6" fill="#262626"/><rect x="1402.2" y="818.6" width="1.6" height="1.6" fill="#262626"/>
<path d="M1446,819 c-2,-3 -7,-3 -7,0 c0,3 5,3 7,0 c2,-3 7,-3 7,0 c0,3 -5,3 -7,0 z" fill="none" stroke="#262626" stroke-width="1.6"/>
<path d="M1486.2,820.6 a4.8,4.8 0 0 1 8,-5 M1495.4,817.4 a4.8,4.8 0 0 1 -8,5" fill="none" stroke="#262626" stroke-width="2"/>
<path d="M1492.6,812.6 l3.2,4 l-4.6,0.8 z M1489,825.4 l-3.2,-4 l4.6,-0.8 z" fill="#262626"/>
<circle cx="1318" cy="850" r="10" fill="url(#circg)"/>
<circle cx="1531" cy="850.3" r="10" fill="url(#circg)"/>
<path d="M1318,845.5 l-4,4.5 l4,4.5 M1322,845.5 l-4,4.5 l4,4.5" fill="none" stroke="#262626" stroke-width="1.4"/>
<path d="M1528,845.5 l4,4.5 l-4,4.5 M1532,845.5 l4,4.5 l-4,4.5" fill="none" stroke="#262626" stroke-width="1.4"/>
<text x="1344.9" y="857.9" font-size="21.5" fill="#2a2a2a" text-anchor="start" textLength="50.1" lengthAdjust="spacingAndGlyphs" stroke="#2a2a2a" stroke-width="0.55">Back</text>
<text x="1451.7" y="857.9" font-size="21.5" fill="#2a2a2a" text-anchor="start" textLength="51.2" lengthAdjust="spacingAndGlyphs" stroke="#2a2a2a" stroke-width="0.55">Next</text>
<rect x="912.1" y="34.6" width="644.5" height="516.8" fill="none" stroke="#c8c300" stroke-width="6.2"/>
<text x="1195.0" y="55.0" font-size="13.0" fill="#d4d4d4" text-anchor="start" textLength="78.8" lengthAdjust="spacingAndGlyphs" stroke="#d4d4d4" stroke-width="0.33">CIE 1976 u'v'</text>
<rect x="950.6" y="59.6" width="599.8" height="461" fill="none" stroke="#a8a8a8" stroke-width="1.3"/>
<line x1="944.5" y1="520.6" x2="950.6" y2="520.6" stroke="#cfcfcf" stroke-width="1.4"/>
<text x="943.8" y="526.0" font-size="13.0" fill="#d4d4d4" text-anchor="end" stroke="#d4d4d4" stroke-width="0.33">0</text>
<line x1="944.5" y1="482.3" x2="950.6" y2="482.3" stroke="#cfcfcf" stroke-width="1.4"/>
<text x="943.8" y="487.7" font-size="13.0" fill="#d4d4d4" text-anchor="end" stroke="#d4d4d4" stroke-width="0.33">0,05</text>
<line x1="944.5" y1="444.0" x2="950.6" y2="444.0" stroke="#cfcfcf" stroke-width="1.4"/>
<text x="943.8" y="449.4" font-size="13.0" fill="#d4d4d4" text-anchor="end" stroke="#d4d4d4" stroke-width="0.33">0,1</text>
<line x1="944.5" y1="405.6" x2="950.6" y2="405.6" stroke="#cfcfcf" stroke-width="1.4"/>
<text x="943.8" y="411.0" font-size="13.0" fill="#d4d4d4" text-anchor="end" stroke="#d4d4d4" stroke-width="0.33">0,15</text>
<line x1="944.5" y1="367.3" x2="950.6" y2="367.3" stroke="#cfcfcf" stroke-width="1.4"/>
<text x="943.8" y="372.7" font-size="13.0" fill="#d4d4d4" text-anchor="end" stroke="#d4d4d4" stroke-width="0.33">0,2</text>
<line x1="944.5" y1="329.0" x2="950.6" y2="329.0" stroke="#cfcfcf" stroke-width="1.4"/>
<text x="943.8" y="334.4" font-size="13.0" fill="#d4d4d4" text-anchor="end" stroke="#d4d4d4" stroke-width="0.33">0,25</text>
<line x1="944.5" y1="290.6" x2="950.6" y2="290.6" stroke="#cfcfcf" stroke-width="1.4"/>
<text x="943.8" y="296.0" font-size="13.0" fill="#d4d4d4" text-anchor="end" stroke="#d4d4d4" stroke-width="0.33">0,3</text>
<line x1="944.5" y1="252.3" x2="950.6" y2="252.3" stroke="#cfcfcf" stroke-width="1.4"/>
<text x="943.8" y="257.7" font-size="13.0" fill="#d4d4d4" text-anchor="end" stroke="#d4d4d4" stroke-width="0.33">0,35</text>
<line x1="944.5" y1="214.0" x2="950.6" y2="214.0" stroke="#cfcfcf" stroke-width="1.4"/>
<text x="943.8" y="219.4" font-size="13.0" fill="#d4d4d4" text-anchor="end" stroke="#d4d4d4" stroke-width="0.33">0,4</text>
<line x1="944.5" y1="175.7" x2="950.6" y2="175.7" stroke="#cfcfcf" stroke-width="1.4"/>
<text x="943.8" y="181.1" font-size="13.0" fill="#d4d4d4" text-anchor="end" stroke="#d4d4d4" stroke-width="0.33">0,45</text>
<line x1="944.5" y1="137.4" x2="950.6" y2="137.4" stroke="#cfcfcf" stroke-width="1.4"/>
<text x="943.8" y="142.8" font-size="13.0" fill="#d4d4d4" text-anchor="end" stroke="#d4d4d4" stroke-width="0.33">0,5</text>
<line x1="944.5" y1="99.0" x2="950.6" y2="99.0" stroke="#cfcfcf" stroke-width="1.4"/>
<text x="943.8" y="104.4" font-size="13.0" fill="#d4d4d4" text-anchor="end" stroke="#d4d4d4" stroke-width="0.33">0,55</text>
<line x1="950.6" y1="520.6" x2="950.6" y2="527.0" stroke="#cfcfcf" stroke-width="1.4"/>
<text x="950.6" y="541.5" font-size="13.0" fill="#d4d4d4" text-anchor="middle" stroke="#d4d4d4" stroke-width="0.33">0</text>
<line x1="1000.5" y1="520.6" x2="1000.5" y2="527.0" stroke="#cfcfcf" stroke-width="1.4"/>
<text x="1000.5" y="541.5" font-size="13.0" fill="#d4d4d4" text-anchor="middle" stroke="#d4d4d4" stroke-width="0.33">0,05</text>
<line x1="1050.4" y1="520.6" x2="1050.4" y2="527.0" stroke="#cfcfcf" stroke-width="1.4"/>
<text x="1050.4" y="541.5" font-size="13.0" fill="#d4d4d4" text-anchor="middle" stroke="#d4d4d4" stroke-width="0.33">0,1</text>
<line x1="1100.4" y1="520.6" x2="1100.4" y2="527.0" stroke="#cfcfcf" stroke-width="1.4"/>
<text x="1100.4" y="541.5" font-size="13.0" fill="#d4d4d4" text-anchor="middle" stroke="#d4d4d4" stroke-width="0.33">0,15</text>
<line x1="1150.3" y1="520.6" x2="1150.3" y2="527.0" stroke="#cfcfcf" stroke-width="1.4"/>
<text x="1150.3" y="541.5" font-size="13.0" fill="#d4d4d4" text-anchor="middle" stroke="#d4d4d4" stroke-width="0.33">0,2</text>
<line x1="1200.2" y1="520.6" x2="1200.2" y2="527.0" stroke="#cfcfcf" stroke-width="1.4"/>
<text x="1200.2" y="541.5" font-size="13.0" fill="#d4d4d4" text-anchor="middle" stroke="#d4d4d4" stroke-width="0.33">0,25</text>
<line x1="1250.1" y1="520.6" x2="1250.1" y2="527.0" stroke="#cfcfcf" stroke-width="1.4"/>
<text x="1250.1" y="541.5" font-size="13.0" fill="#d4d4d4" text-anchor="middle" stroke="#d4d4d4" stroke-width="0.33">0,3</text>
<line x1="1300.0" y1="520.6" x2="1300.0" y2="527.0" stroke="#cfcfcf" stroke-width="1.4"/>
<text x="1300.0" y="541.5" font-size="13.0" fill="#d4d4d4" text-anchor="middle" stroke="#d4d4d4" stroke-width="0.33">0,35</text>
<line x1="1350.0" y1="520.6" x2="1350.0" y2="527.0" stroke="#cfcfcf" stroke-width="1.4"/>
<text x="1350.0" y="541.5" font-size="13.0" fill="#d4d4d4" text-anchor="middle" stroke="#d4d4d4" stroke-width="0.33">0,4</text>
<line x1="1399.9" y1="520.6" x2="1399.9" y2="527.0" stroke="#cfcfcf" stroke-width="1.4"/>
<text x="1399.9" y="541.5" font-size="13.0" fill="#d4d4d4" text-anchor="middle" stroke="#d4d4d4" stroke-width="0.33">0,45</text>
<line x1="1449.8" y1="520.6" x2="1449.8" y2="527.0" stroke="#cfcfcf" stroke-width="1.4"/>
<text x="1449.8" y="541.5" font-size="13.0" fill="#d4d4d4" text-anchor="middle" stroke="#d4d4d4" stroke-width="0.33">0,5</text>
<line x1="1499.7" y1="520.6" x2="1499.7" y2="527.0" stroke="#cfcfcf" stroke-width="1.4"/>
<text x="1499.7" y="541.5" font-size="13.0" fill="#d4d4d4" text-anchor="middle" stroke="#d4d4d4" stroke-width="0.33">0,55</text>
<rect x="1042.9" y="69.6" width="12" height="12" fill="none" stroke="#fff" stroke-width="1.5"/>
<rect x="1055.9" y="79.8" width="12" height="12" fill="none" stroke="#fff" stroke-width="1.5"/>
<rect x="1070.0" y="92.9" width="12" height="12" fill="none" stroke="#fff" stroke-width="1.5"/>
<rect x="1088.9" y="109.8" width="12" height="12" fill="none" stroke="#fff" stroke-width="1.5"/>
<rect x="1111.8" y="129.0" width="12" height="12" fill="none" stroke="#fff" stroke-width="1.5"/>
<rect x="1149.0" y="79.8" width="12" height="12" fill="none" stroke="#fff" stroke-width="1.5"/>
<rect x="1148.0" y="92.2" width="12" height="12" fill="none" stroke="#fff" stroke-width="1.5"/>
<rect x="1146.2" y="105.4" width="12" height="12" fill="none" stroke="#fff" stroke-width="1.5"/>
<rect x="1145.0" y="119.3" width="12" height="12" fill="none" stroke="#fff" stroke-width="1.5"/>
<rect x="1143.7" y="134.6" width="12" height="12" fill="none" stroke="#fff" stroke-width="1.5"/>
<rect x="1064.8" y="165.8" width="12" height="12" fill="none" stroke="#fff" stroke-width="1.5"/>
<rect x="1080.1" y="163.0" width="12" height="12" fill="none" stroke="#fff" stroke-width="1.5"/>
<rect x="1095.1" y="160.9" width="12" height="12" fill="none" stroke="#fff" stroke-width="1.5"/>
<rect x="1111.1" y="159.1" width="12" height="12" fill="none" stroke="#fff" stroke-width="1.5"/>
<rect x="1126.0" y="156.8" width="12" height="12" fill="none" stroke="#fff" stroke-width="1.5"/>
<rect x="1269.0" y="262.1" width="12" height="12" fill="none" stroke="#fff" stroke-width="1.5"/>
<rect x="1232.9" y="231.8" width="12" height="12" fill="none" stroke="#fff" stroke-width="1.5"/>
<rect x="1205.0" y="208.0" width="12" height="12" fill="none" stroke="#fff" stroke-width="1.5"/>
<rect x="1179.9" y="185.9" width="12" height="12" fill="none" stroke="#fff" stroke-width="1.5"/>
<rect x="1158.8" y="168.1" width="12" height="12" fill="none" stroke="#fff" stroke-width="1.5"/>
<rect x="1120.0" y="392.8" width="12" height="12" fill="none" stroke="#fff" stroke-width="1.5"/>
<rect x="1126.1" y="318.7" width="12" height="12" fill="none" stroke="#fff" stroke-width="1.5"/>
<rect x="1132.1" y="262.1" width="12" height="12" fill="none" stroke="#fff" stroke-width="1.5"/>
<rect x="1136.0" y="218.0" width="12" height="12" fill="none" stroke="#fff" stroke-width="1.5"/>
<rect x="1138.9" y="181.9" width="12" height="12" fill="none" stroke="#fff" stroke-width="1.5"/>
<rect x="1440.0" y="110.0" width="12" height="12" fill="none" stroke="#fff" stroke-width="1.5"/>
<rect x="1374.0" y="119.9" width="12" height="12" fill="none" stroke="#fff" stroke-width="1.5"/>
<rect x="1311.8" y="128.9" width="12" height="12" fill="none" stroke="#fff" stroke-width="1.5"/>
<rect x="1248.9" y="139.0" width="12" height="12" fill="none" stroke="#fff" stroke-width="1.5"/>
<rect x="1193.8" y="146.9" width="12" height="12" fill="none" stroke="#fff" stroke-width="1.5"/>
<rect x="1141" y="153.7" width="12" height="12" fill="none" stroke="#000" stroke-width="1.8"/>
<circle cx="1036.4" cy="73.5" r="3.9" fill="#22aa22" stroke="#111" stroke-width="1.3"/>
<circle cx="1050.4" cy="85.4" r="3.9" fill="#60a860" stroke="#111" stroke-width="1.3"/>
<circle cx="1066.4" cy="97.2" r="3.9" fill="#78b078" stroke="#111" stroke-width="1.3"/>
<circle cx="1088.5" cy="114.4" r="3.9" fill="#88b488" stroke="#111" stroke-width="1.3"/>
<circle cx="1115.4" cy="134.4" r="3.9" fill="#98b498" stroke="#111" stroke-width="1.3"/>
<circle cx="1157.4" cy="86.7" r="3.9" fill="#c0b830" stroke="#111" stroke-width="1.3"/>
<circle cx="1156.3" cy="97.2" r="3.9" fill="#b8b460" stroke="#111" stroke-width="1.3"/>
<circle cx="1154.4" cy="110.4" r="3.9" fill="#b8b47c" stroke="#111" stroke-width="1.3"/>
<circle cx="1152.4" cy="124.3" r="3.9" fill="#b8b88c" stroke="#111" stroke-width="1.3"/>
<circle cx="1149.3" cy="139.6" r="3.9" fill="#b8b89c" stroke="#111" stroke-width="1.3"/>
<circle cx="1057.4" cy="171.4" r="3.9" fill="#30a0a8" stroke="#111" stroke-width="1.3"/>
<circle cx="1075.4" cy="169.4" r="3.9" fill="#68b0b0" stroke="#111" stroke-width="1.3"/>
<circle cx="1093.5" cy="166.5" r="3.9" fill="#80b4b4" stroke="#111" stroke-width="1.3"/>
<circle cx="1111.5" cy="164.4" r="3.9" fill="#90b4b4" stroke="#111" stroke-width="1.3"/>
<circle cx="1129.4" cy="161.4" r="3.9" fill="#a0b4b4" stroke="#111" stroke-width="1.3"/>
<circle cx="1282.3" cy="262.4" r="3.9" fill="#a828a8" stroke="#111" stroke-width="1.3"/>
<circle cx="1246.4" cy="235.4" r="3.9" fill="#b860b8" stroke="#111" stroke-width="1.3"/>
<circle cx="1216.4" cy="211.5" r="3.9" fill="#bc78bc" stroke="#111" stroke-width="1.3"/>
<circle cx="1189.5" cy="190.8" r="3.9" fill="#b890b8" stroke="#111" stroke-width="1.3"/>
<circle cx="1167.3" cy="174.6" r="3.9" fill="#b8a0b8" stroke="#111" stroke-width="1.3"/>
<circle cx="1113.0" cy="415.0" r="3.9" fill="#1c1ca0" stroke="#111" stroke-width="1.3"/>
<circle cx="1124.6" cy="335.5" r="3.9" fill="#5858b0" stroke="#111" stroke-width="1.3"/>
<circle cx="1133.4" cy="270.7" r="3.9" fill="#7878b8" stroke="#111" stroke-width="1.3"/>
<circle cx="1138.4" cy="225.5" r="3.9" fill="#8888b8" stroke="#111" stroke-width="1.3"/>
<circle cx="1143.4" cy="188.4" r="3.9" fill="#9c9cb8" stroke="#111" stroke-width="1.3"/>
<circle cx="1446.5" cy="115.3" r="3.9" fill="#c01818" stroke="#111" stroke-width="1.3"/>
<circle cx="1388.5" cy="124.3" r="3.9" fill="#b04848" stroke="#111" stroke-width="1.3"/>
<circle cx="1329.5" cy="133.3" r="3.9" fill="#b86060" stroke="#111" stroke-width="1.3"/>
<circle cx="1263.4" cy="142.4" r="3.9" fill="#b87070" stroke="#111" stroke-width="1.3"/>
<circle cx="1206.1" cy="151.4" r="3.9" fill="#c0a0a0" stroke="#111" stroke-width="1.3"/>
<circle cx="1068.5" cy="72.2" r="4.2" fill="#000"/>
<circle cx="1147.2" cy="160.3" r="3.9" fill="#fff" stroke="#111" stroke-width="1.3"/>
<rect x="1343.0" y="376.5" width="205.0" height="139.5" fill="#2c2c2c"/>
<rect x="1346.7" y="379.8" width="197.6" height="132.8" fill="#232323" stroke="#a8a8a8" stroke-width="1.3"/>
<path d="M1347.3,380.4 H1444.8 L1544,446 V506 L1347.3,386.9 Z" fill="url(#olv)"/>
<path d="M1347.3,386.9 L1544,506 V512 H1347.3 Z" fill="url(#ylw)"/>
<rect x="1437.3" y="439.1" width="13.4" height="13.4" fill="none" stroke="#fff" stroke-width="1.5"/>
<circle cx="1466.1" cy="449.4" r="3.8" fill="#c0b400" stroke="#111" stroke-width="1.2"/>
</svg>
<script>(function(){
var c=document.getElementById('cie'); if(!c||!c.getContext) return;
var ctx=c.getContext('2d');
var OX=951, OY=60, W=c.width, H=c.height;
var CX0=950.6, CY0=520.5, KU=998.4, KV=769, DIM=0.6, GAM=1.0;
var PP=[[1204.8,507.2],[1196.7,499.9],[1187.0,490.2],[1177.2,482.1],[1167.5,474.0],[1157.8,465.9],[1148.1,457.8],[1138.3,448.9],[1128.6,440.0],[1118.9,430.2],[1109.2,420.5],[1099.4,410.0],[1094.4,404.4],[1065.1,363.3],[1033.3,312.2],[1002.7,257.0],[978.7,203.9],[962.5,159.2],[954.1,126.0],[952.0,102.8],[955.2,86.9],[962.9,76.8],[973.7,71.7],[986.6,69.8],[1000.6,69.3],[1014.8,69.5],[1029.7,70.2],[1045.7,71.3],[1063.1,72.9],[1082.2,74.8],[1103.5,77.1],[1126.9,79.7],[1152.9,82.7],[1181.4,85.9],[1212.5,89.5],[1246.1,93.4],[1281.6,97.5],[1318.1,101.7],[1353.4,105.8],[1387.8,109.7],[1419.0,113.3],[1446.6,116.5],[1470.0,119.2],[1489.7,121.4],[1506.2,123.3],[1520.6,125.0],[1532.7,126.4],[1542.5,127.5],[1550.1,128.4],[1556.1,129.1],[1560.5,129.6],[1565.8,130.2],[1573.0,131.0]];
function uv(x,y){var d=-2*x+12*y+3;return [4*x/d,9*y/d];}
function P(x,y){var q=uv(x,y);return [CX0+KU*q[0]-OX, CY0-KV*q[1]-OY];}
ctx.fillStyle='#232323'; ctx.fillRect(0,0,W,H);
function mk(dim){
 var off=document.createElement('canvas'); off.width=W; off.height=H;
 var oc=off.getContext('2d'); var img=oc.createImageData(W,H); var d=img.data;
 for(var j=0;j<H;j++){ var v=(CY0-(OY+j+0.5))/KV;
  for(var i=0;i<W;i++){ var u=(OX+i+0.5-CX0)/KU;
   var den=6*u-16*v+12; var x=9*u/den, y=4*v/den; if(y<=0.0001){y=0.0001;}
   var X=x/y, Y=1, Z=(1-x-y)/y;
   var r= 2.4934969*X -0.9313836*Y -0.4027108*Z;
   var g=-0.8294890*X +1.7626641*Y +0.0236247*Z;
   var b= 0.0358458*X -0.0761724*Y +0.9568845*Z;
   if(r<0)r=0; if(g<0)g=0; if(b<0)b=0;
   var m=Math.max(r,g,b)||1; r/=m; g/=m; b/=m;
   r=Math.pow(r,GAM); g=Math.pow(g,GAM); b=Math.pow(b,GAM);
   var k=255*dim; var p=(j*W+i)*4;
   d[p]=r*k; d[p+1]=g*k; d[p+2]=b*k; d[p+3]=255;
  }}
 oc.putImageData(img,0,0); return off;
}
var dimI=mk(DIM), briI=mk(1);
function locus(){
 ctx.beginPath();
 var pts=PP.map(function(a){return [a[0]-OX,a[1]-OY];});
 ctx.moveTo(pts[0][0],pts[0][1]);
 for(var n=1;n<pts.length-1;n++){
  var mx=(pts[n][0]+pts[n+1][0])/2, my=(pts[n][1]+pts[n+1][1])/2;
  ctx.quadraticCurveTo(pts[n][0],pts[n][1],mx,my);
 }
 ctx.lineTo(pts[pts.length-1][0],pts[pts.length-1][1]);
 ctx.closePath();
}
ctx.save(); locus(); ctx.clip(); ctx.drawImage(dimI,0,0);
var R=P(0.68,0.32), G=P(0.265,0.69), B=P(0.15,0.06);
ctx.beginPath(); ctx.moveTo(R[0],R[1]); ctx.lineTo(G[0],G[1]); ctx.lineTo(B[0],B[1]); ctx.closePath(); ctx.clip();
ctx.drawImage(briI,0,0); ctx.restore();
})();
</script>
</body></html>
